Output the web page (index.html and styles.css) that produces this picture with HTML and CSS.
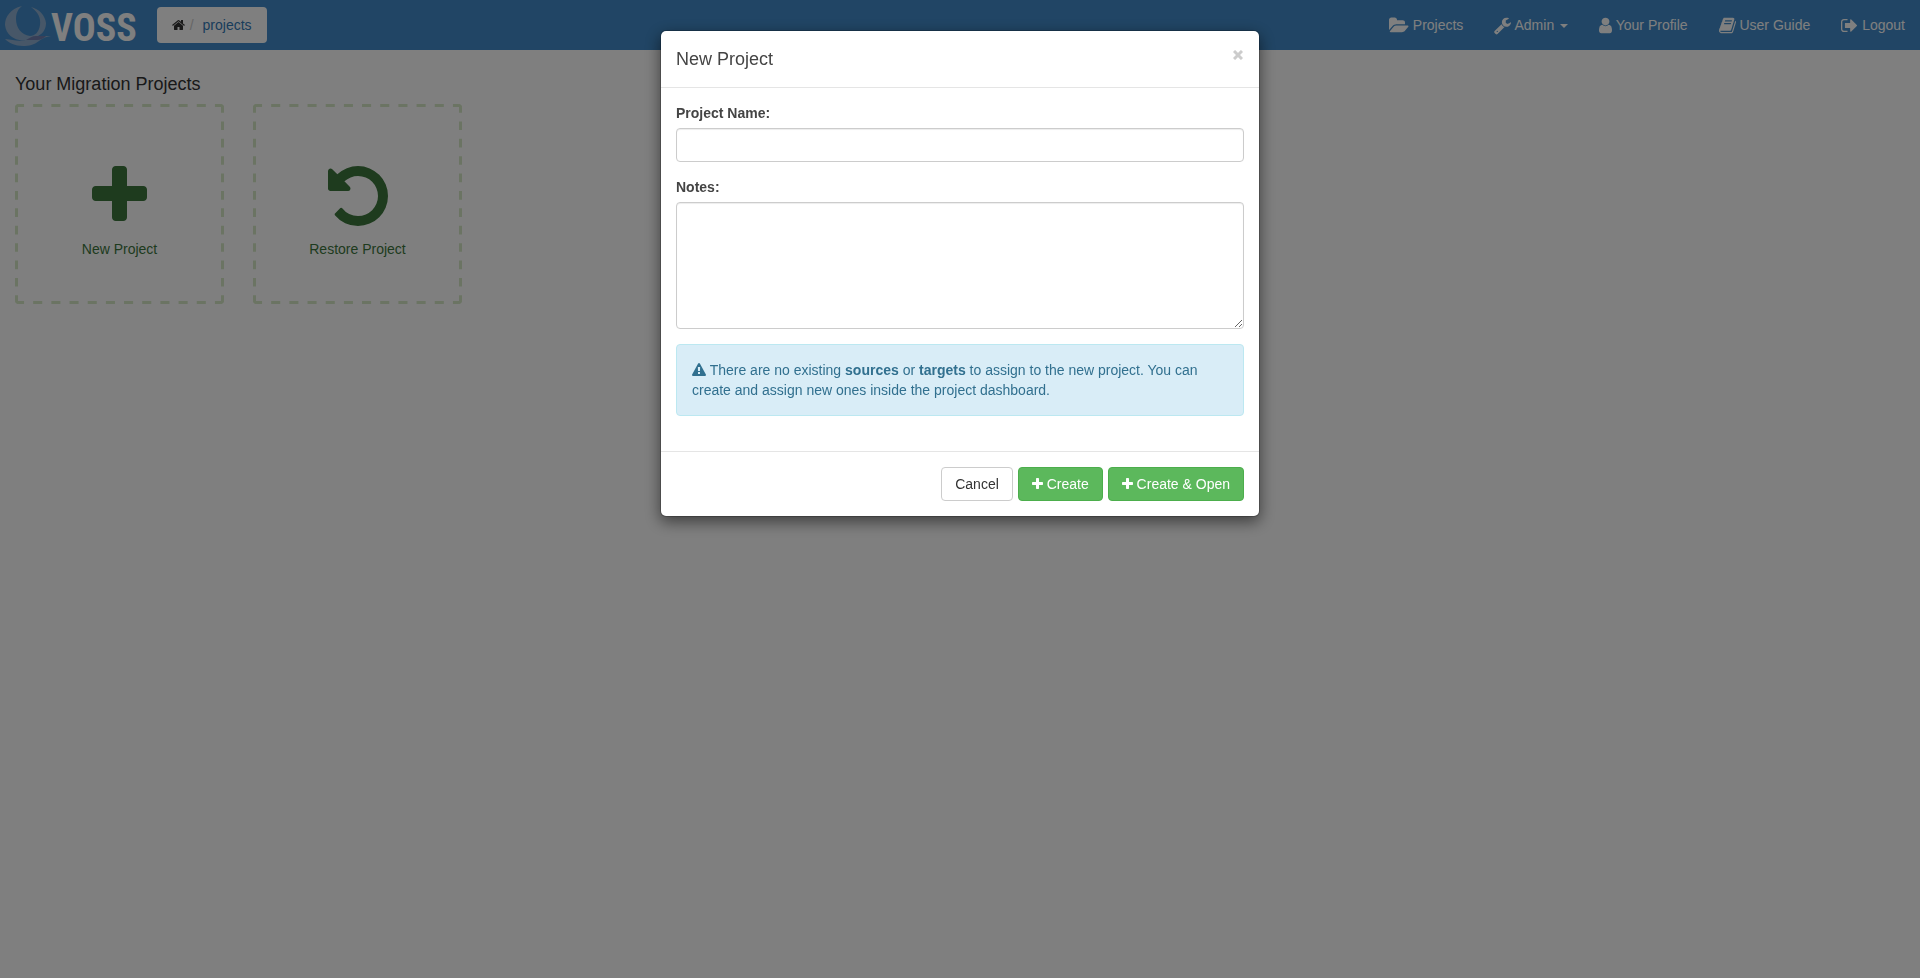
FILE: index.html
```html
<!DOCTYPE html>
<html lang="en">
<head>
<meta charset="utf-8">
<title>Projects</title>
<link rel="stylesheet" href="styles.css">
</head>
<body>
<svg class="sprite" aria-hidden="true">
  <symbol id="plus" viewBox="192 0 1408 1792"><path d="M1600 736v192q0 40-28 68t-68 28h-416v416q0 40-28 68t-68 28h-192q-40 0-68-28t-28-68v-416h-416q-40 0-68-28t-28-68v-192q0-40 28-68t68-28h416v-416q0-40 28-68t68-28h192q40 0 68 28t28 68v416h416q40 0 68 28t28 68z"/></symbol>
  <symbol id="undo" viewBox="128 0 1536 1792"><path d="M1664 896q0 156-61 298t-164 245-245 164-298 61q-172 0-327-72.5t-264-204.5q-7-10-6.5-22.5t8.5-20.5l137-138q10-9 25-9 16 2 23 12 73 95 179 147t225 52q104 0 198.5-40.5t163.5-109.5 109.5-163.5 40.5-198.5-40.5-198.5-109.5-163.5-163.5-109.5-198.5-40.5q-98 0-188 35.5t-160 101.5l137 138q31 30 14 69-17 40-59 40h-448q-26 0-45-19t-19-45v-448q0-42 40-59 39-17 69 14l130 129q107-101 244.5-156.5t284.5-55.5q156 0 298 61t245 164 164 245 61 298z"/></symbol>
  <symbol id="home" viewBox="64 0 1664 1792"><path d="M1472 992v480q0 26-19 45t-45 19h-384v-384h-256v384h-384q-26 0-45-19t-19-45v-480q0-1 .5-3t.5-3l575-474 575 474q1 2 1 6zm223-69l-62 74q-8 9-21 11h-3q-13 0-21-7l-692-577-692 577q-12 8-24 7-13-2-21-11l-62-74q-8-10-7-23.5t11-21.5l719-599q32-26 76-26t76 26l244 204v-195q0-14 9-23t23-9h192q14 0 23 9t9 23v408l219 182q10 8 11 21.5t-7 23.5z"/></symbol>
  <symbol id="folder" viewBox="0 0 1920 1792"><path d="M1879 952q0 31-31 66l-336 396q-43 51-120.5 86.5t-143.5 35.5h-1088q-34 0-60.5-13t-26.5-43q0-31 31-66l336-396q43-51 120.5-86.5t143.5-35.5h1088q34 0 60.5 13t26.5 43zm-343-344v160h-832q-94 0-197 47.5t-164 119.5l-337 396-5 6q0-4-.5-12.5t-.5-12.5v-960q0-92 66-158t158-66h320q92 0 158 66t66 158v32h544q92 0 158 66t66 158z"/></symbol>
  <symbol id="wrench" viewBox="64 0 1664 1792"><path d="M448 1472q0-26-19-45t-45-19-45 19-19 45 19 45 45 19 45-19 19-45zm644-420l-682 682q-37 37-90 37-52 0-91-37l-106-108q-38-36-38-90 0-53 38-91l681-681q39 98 114.5 173.5t173.5 114.5zm634-435q0 39-23 106-47 134-164.5 217.5t-258.5 83.5q-185 0-316.5-131.5t-131.5-316.5 131.5-316.5 316.5-131.5q58 0 121.5 16.5t107.5 46.5q16 11 16 28t-16 28l-293 169v224l193 107q5-3 79-48.5t135.5-81 70.5-35.5q15 0 23.5 10t8.5 25z"/></symbol>
  <symbol id="user" viewBox="256 0 1280 1792"><path d="M1536 1399q0 109-62.5 187t-150.5 78h-854q-88 0-150.5-78t-62.5-187q0-85 8.5-160.5t31.5-152 58.5-131 94-89 134.5-34.5q131 128 313 128t313-128q76 0 134.5 34.5t94 89 58.5 131 31.5 152 8.5 160.5zm-256-887q0 159-112.5 271.5t-271.5 112.5-271.5-112.5-112.5-271.5 112.5-271.5 271.5-112.5 271.5 112.5 112.5 271.5z"/></symbol>
  <symbol id="book" viewBox="64 0 1664 1792"><path d="M1703 478q40 57 18 129l-275 906q-19 64-76.5 107.5t-122.5 43.5h-923q-77 0-148.5-53.5t-99.5-131.5q-24-67-2-127 0-4 3-27t4-37q1-8-3-21.5t-3-19.5q2-11 8-21t16.5-23.5 16.5-23.5q23-38 45-91.5t30-91.5q3-10 .5-30t-.5-28q3-11 17-28t17-23q21-36 42-92t25-90q1-9-2.5-32t.5-28q4-13 22-30.5t22-22.5q19-26 42.5-84.5t27.5-96.5q1-8-3-25.5t-2-26.5q2-8 9-18t18-23 17-21q8-12 16.5-30.5t15-35 16-36 19.5-32 26.5-23.5 36-11.5 47.5 5.5l-1 3q38-9 51-9h761q74 0 114 56t18 130l-274 906q-36 119-71.5 153.5t-128.5 34.5h-869q-27 0-38 15-11 16-1 43 24 70 144 70h923q29 0 56-15.5t35-41.5l300-987q7-22 5-57 38 15 59 43zm-1064 2q-4 13 2 22.5t20 9.5h608q13 0 25.5-9.5t16.5-22.5l21-64q4-13-2-22.5t-20-9.5h-608q-13 0-25.5 9.5t-16.5 22.5zm-83 256q-4 13 2 22.5t20 9.5h608q13 0 25.5-9.5t16.5-22.5l21-64q4-13-2-22.5t-20-9.5h-608q-13 0-25.5 9.5t-16.5 22.5z"/></symbol>
  <symbol id="logout" viewBox="64 0 1664 1792"><path d="M704 1440q0 4 1 20t.5 26.5-3 23.5-10 19.5-20.5 6.5h-320q-119 0-203.5-84.5t-84.5-203.5v-704q0-119 84.5-203.5t203.5-84.5h320q13 0 22.5 9.5t9.5 22.5q0 4 1 20t.5 26.5-3 23.5-10 19.5-20.5 6.5h-320q-66 0-113 47t-47 113v704q0 66 47 113t113 47h312l11.5 1 11.5 3 8 5.5 7 9 2 13.5zm928-544q0 26-19 45l-544 544q-19 19-45 19t-45-19-19-45v-288h-448q-26 0-45-19t-19-45v-384q0-26 19-45t45-19h448v-288q0-26 19-45t45-19 45 19l544 544q19 19 19 45z"/></symbol>
  <symbol id="warning" viewBox="0 0 1792 1792"><path d="M1024 1375v-190q0-14-9.5-23.5t-22.5-9.5h-192q-13 0-22.5 9.5t-9.5 23.5v190q0 14 9.5 23.5t22.5 9.5h192q13 0 22.5-9.5t9.5-23.5zm-2-374l18-459q0-12-10-19-13-11-24-11h-220q-11 0-24 11-10 7-10 21l17 457q0 10 10 16.5t24 6.5h185q14 0 23.5-6.5t10.5-16.5zm-14-934l768 1408q35 63-2 126-17 29-46.5 46t-63.5 17h-1536q-34 0-63.5-17t-46.5-46q-37-63-2-126l768-1408q17-31 47-49t65-18 65 18 47 49z"/></symbol>
  <symbol id="frame">
    <line x1="0" y1="0" x2="100%" y2="0" pathLength="23"/>
    <line x1="0" y1="100%" x2="100%" y2="100%" pathLength="23"/>
    <line x1="0" y1="0" x2="0" y2="100%" pathLength="23"/>
    <line x1="100%" y1="0" x2="100%" y2="100%" pathLength="23"/>
  </symbol>
</svg>

<header class="navbar">
  <a class="brand" href="#">
    <svg class="brand-mark" viewBox="4 3 47 44" aria-hidden="true">
      <path fill="#8fafd0" d="M22 6C10 9 5 17 5 25c1 9 8 15 18 15.500C30 40 34 38 38 36c6-3 8-8 8-13C45 15 39 9 31 7c7 5 10 11 9 18-1 7-5 11-10 11C21 35 16 27 16 19c0-6 2-10 6-13z"/>
      <path fill="#8fafd0" d="M5 39c7 1 12 2 18 1.500C28 40 31 36 36 36h15c-7 1-9 3-12 5-5 4-10 5-16 5C15 46 9 43 5 39z"/>
      <path fill="#707fb0" d="M26 40c4-2 6-4 10-4h10c-2 2-5 4-9 4z"/>
    </svg>
    <span class="brand-name">VOSS</span>
  </a>
  <nav class="breadcrumb" aria-label="Breadcrumb">
    <a class="crumb-home" href="#" aria-label="Home"><svg class="icon w13"><use href="#home"/></svg></a>
    <span class="crumb-sep">/</span>
    <a href="#">projects</a>
  </nav>
  <nav class="menu" aria-label="Main">
    <a href="#"><svg class="icon-lg w20"><use href="#folder"/></svg> Projects</a>
    <a href="#"><svg class="icon-lg w17"><use href="#wrench"/></svg> Admin <span class="caret"></span></a>
    <a href="#"><svg class="icon-lg w13"><use href="#user"/></svg> Your Profile</a>
    <a href="#"><svg class="icon-lg w17"><use href="#book"/></svg> User Guide</a>
    <a href="#"><svg class="icon-lg w17"><use href="#logout"/></svg> Logout</a>
  </nav>
</header>

<main class="content">
  <h1 class="heading">Your Migration Projects</h1>
  <div class="tiles">
    <a class="tile" href="#"><svg class="tile-frame"><use href="#frame"/></svg><svg class="tile-icon plus-icon"><use href="#plus"/></svg>New Project</a>
    <a class="tile" href="#"><svg class="tile-frame"><use href="#frame"/></svg><svg class="tile-icon"><use href="#undo"/></svg>Restore Project</a>
  </div>
</main>

<div class="backdrop">
  <form class="modal" role="dialog" aria-labelledby="modal-title">
    <div class="modal-header">
      <h2 class="modal-title" id="modal-title">New Project</h2>
      <button class="close" type="button" aria-label="Close"><svg class="close-icon" viewBox="0 0 10 10"><path d="M1 1l8 8M9 1l-8 8"/></svg></button>
    </div>
    <div class="modal-body">
      <div class="field">
        <label for="name">Project Name:</label>
        <input class="control" id="name" type="text">
      </div>
      <div class="field">
        <label for="notes">Notes:</label>
        <textarea class="control notes" id="notes"></textarea>
      </div>
      <div class="alert"><svg class="icon w14"><use href="#warning"/></svg> There are no existing <strong>sources</strong> or <strong>targets</strong> to assign to the new project. You can create and assign new ones inside the project dashboard.</div>
    </div>
    <div class="modal-footer">
      <button class="btn" type="button">Cancel</button>
      <button class="btn btn-success" type="submit"><svg class="icon w11"><use href="#plus"/></svg> Create</button>
      <button class="btn btn-success" type="submit"><svg class="icon w11"><use href="#plus"/></svg> Create &amp; Open</button>
    </div>
  </form>
</div>
</body>
</html>
```
FILE: styles.css
```css
* { box-sizing: border-box; }

body {
  margin: 0;
  background: #fff;
  color: #444;
  font: 14px/20px "Liberation Sans", Arial, sans-serif;
}

a { color: #337ab7; text-decoration: none; }
.sprite { display: none; }

.icon { height: 14px; vertical-align: -2px; fill: currentColor; }
.icon-lg { height: 19px; vertical-align: -5px; fill: currentColor; }
.w11 { width: 11px; }
.w13 { width: 13px; }
.w14 { width: 14px; }
.w17 { width: 17px; }
.w20 { width: 20px; }

.navbar {
  display: flex;
  align-items: center;
  height: 50px;
  padding: 0 15px 0 4px;
  background: #428bca;
}

.brand { display: flex; align-items: center; color: #fff; }
.brand-mark { width: 47px; height: 44px; }
.brand-name {
  padding-top: 6px;
  font: bold 38px/44px "Roboto Condensed", "Liberation Sans Narrow", "Liberation Sans", sans-serif;
}

.breadcrumb {
  display: flex;
  margin-left: 20px;
  padding: 8px 15px;
  border-radius: 4px;
  background: #fff;
}
.crumb-home { color: #333; }
.crumb-sep { padding: 0 9px 0 5px; color: #ccc; }

.menu { display: flex; gap: 31px; margin-left: auto; }
.menu a { color: #fff; }
.caret {
  display: inline-block;
  margin-left: 2px;
  border: 4px solid transparent;
  border-top-color: currentColor;
  border-bottom: 0;
  vertical-align: middle;
}

.content { padding: 24px 15px; }
.heading { margin: 0 0 9px; color: #333; font-size: 18px; font-weight: 400; line-height: 21px; }
.tiles { display: flex; gap: 29px; }
.tile {
  position: relative;
  display: flex;
  flex-direction: column;
  align-items: center;
  width: 209px;
  height: 200px;
  padding-top: 57px;
  border-radius: 4px;
  overflow: hidden;
  color: #3c763d;
}
.tile-frame {
  position: absolute;
  inset: 0;
  width: 100%;
  height: 100%;
  stroke: #d6e9c6;
  stroke-width: 6;
  stroke-dasharray: 1 1;
}
.tile-icon { width: 60px; height: 70px; margin-bottom: 8px; fill: currentColor; }
.plus-icon { width: 55px; }

.backdrop {
  position: fixed;
  inset: 0;
  padding: 30px 10px;
  background: rgba(0, 0, 0, .5);
}
.modal {
  max-width: 600px;
  margin: 0 auto;
  border: 1px solid rgba(0, 0, 0, .2);
  border-radius: 6px;
  background: #fff;
  background-clip: padding-box;
  box-shadow: 0 5px 15px rgba(0, 0, 0, .5);
}
.modal-header {
  display: flex;
  justify-content: space-between;
  align-items: flex-start;
  padding: 15px;
  border-bottom: 1px solid #e5e5e5;
}
.modal-title { margin: 0; font-size: 18px; font-weight: 400; line-height: 26px; }
.close { display: flex; padding: 4px 1px; border: 0; background: none; }
.close-icon { width: 10px; height: 10px; stroke: #ccc; stroke-width: 3; }

.modal-body { padding: 15px 15px 35px; }
.field { margin-bottom: 15px; }
.field label { display: block; margin-bottom: 5px; font-weight: 700; }
.control {
  display: block;
  width: 100%;
  height: 34px;
  padding: 6px 12px;
  border: 1px solid #ccc;
  border-radius: 4px;
  background: #fff;
  color: #555;
  font: inherit;
  box-shadow: inset 0 1px 1px rgba(0, 0, 0, .075);
}
.notes { height: 127px; }
.alert {
  padding: 15px;
  border: 1px solid #bce8f1;
  border-radius: 4px;
  background: #d9edf7;
  color: #31708f;
}

.modal-footer {
  display: flex;
  justify-content: flex-end;
  gap: 5px;
  padding: 15px;
  border-top: 1px solid #e5e5e5;
}
.btn {
  padding: 6px 13px;
  border: 1px solid #ccc;
  border-radius: 4px;
  background: #fff;
  color: #333;
  font: inherit;
}
.btn-success { border-color: #4cae4c; background: #5cb85c; color: #fff; }
```
